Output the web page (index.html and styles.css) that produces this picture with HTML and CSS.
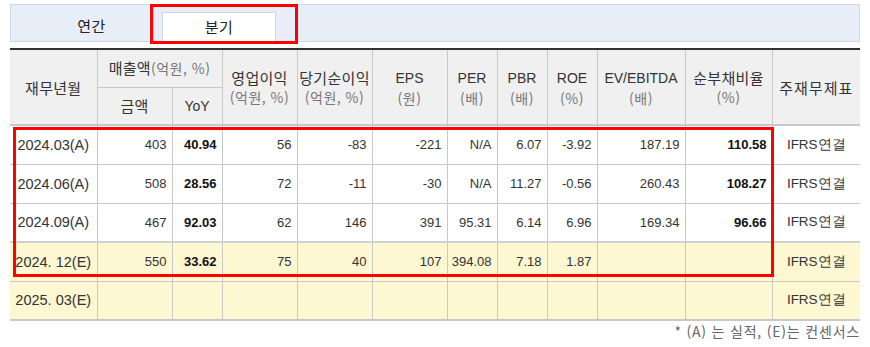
FILE: index.html
```html
<!DOCTYPE html>
<html lang="ko">
<head>
<meta charset="utf-8">
<link rel="stylesheet" href="styles.css">
</head>
<body>
<div class="wrap">
  <div class="tabs">
    <div class="tab">연간</div>
    <div class="tab active">분기</div>
  </div>
  <table class="fin">
    <colgroup>
      <col class="w87"><col class="w75"><col class="w50"><col class="w75"><col class="w75"><col class="w75"><col class="w50"><col class="w50"><col class="w50"><col class="w88"><col class="w87"><col class="w88">
    </colgroup>
    <thead>
      <tr>
        <th rowspan="2">재무년월</th>
        <th colspan="2">매출액<span class="unit">(억원, %)</span></th>
        <th rowspan="2">영업이익<br><span class="unit">(억원, %)</span></th>
        <th rowspan="2">당기순이익<br><span class="unit">(억원, %)</span></th>
        <th rowspan="2"><span class="en">EPS</span><br><span class="unit">(원)</span></th>
        <th rowspan="2"><span class="en">PER</span><br><span class="unit">(배)</span></th>
        <th rowspan="2"><span class="en">PBR</span><br><span class="unit">(배)</span></th>
        <th rowspan="2"><span class="en">ROE</span><br><span class="unit">(%)</span></th>
        <th rowspan="2"><span class="en">EV/EBITDA</span><br><span class="unit">(배)</span></th>
        <th rowspan="2">순부채비율<br><span class="unit">(%)</span></th>
        <th rowspan="2" class="wide">주재무제표</th>
      </tr>
      <tr class="sub">
        <th>금액</th>
        <th><span class="en">YoY</span></th>
      </tr>
    </thead>
    <tbody>
      <tr>
        <td class="date">2024.03(A)</td><td>403</td><td class="b">40.94</td><td>56</td><td>-83</td><td>-221</td><td>N/A</td><td>6.07</td><td>-3.92</td><td>187.19</td><td class="b">110.58</td><td class="std">IFRS연결</td>
      </tr>
      <tr>
        <td class="date">2024.06(A)</td><td>508</td><td class="b">28.56</td><td>72</td><td>-11</td><td>-30</td><td>N/A</td><td>11.27</td><td>-0.56</td><td>260.43</td><td class="b">108.27</td><td class="std">IFRS연결</td>
      </tr>
      <tr>
        <td class="date">2024.09(A)</td><td>467</td><td class="b">92.03</td><td>62</td><td>146</td><td>391</td><td>95.31</td><td>6.14</td><td>6.96</td><td>169.34</td><td class="b">96.66</td><td class="std">IFRS연결</td>
      </tr>
      <tr class="est first">
        <td class="date">2024. 12(E)</td><td>550</td><td class="b">33.62</td><td>75</td><td>40</td><td>107</td><td>394.08</td><td>7.18</td><td>1.87</td><td></td><td></td><td class="std">IFRS연결</td>
      </tr>
      <tr class="est">
        <td class="date">2025. 03(E)</td><td></td><td></td><td></td><td></td><td></td><td></td><td></td><td></td><td></td><td></td><td class="std">IFRS연결</td>
      </tr>
    </tbody>
  </table>
  <p class="note">* (A) 는 실적, (E)는 컨센서스</p>
  <div class="mark mark-tab"></div>
  <div class="mark mark-rows"></div>
</div>
</body>
</html>
```
FILE: styles.css
```css
* { box-sizing: border-box; }
body {
  margin: 0;
  background: #fff;
  font-family: "Noto Sans CJK KR", "Liberation Sans", sans-serif;
  color: #333;
}
.wrap {
  position: relative;
  padding: 4px 10px 0 10px;
  width: 870px;
}
.tabs {
  display: flex;
  height: 38px;
  background: #e8eef8;
  border: 1px solid #cfd7e6;
  padding-top: 7px;
}
.tab {
  width: 151px;
  padding-left: 10px;
  text-align: center;
  font-size: 15px;
  letter-spacing: 0.5px;
  line-height: 27px;
  color: #222;
}
.tab.active {
  width: 114px;
  padding-left: 0;
  background: #fff;
  border: 1px solid #cfd7e6;
  border-bottom: none;
}
.fin {
  margin-top: 6px;
  width: 850px;
  table-layout: fixed;
  border-collapse: collapse;
  border-top: 2px solid #333;
  border-bottom: 2px solid #c8c8c8;
}
.w87 { width: 87px; }
.w75 { width: 75px; }
.w50 { width: 50px; }
.w88 { width: 88px; }
.fin th {
  background: #f0f0f0;
  font-weight: normal;
  font-size: 15px;
  letter-spacing: 0.3px;
  line-height: 19px;
  color: #333;
  border-left: 1px solid #c8c8c8;
  border-right: 1px solid #c8c8c8;
  border-bottom: 1px solid #c8c8c8;
  height: 38px;
  padding: 0;
  text-align: center;
  white-space: nowrap;
}
.fin th.wide { letter-spacing: 1px; }
.fin thead tr.sub th { height: 38px; }
.fin thead { border-bottom: 2px solid #c8c8c8; }
.fin th:first-child { border-left: none; }
.fin tr:first-child th:last-child { border-right: none; }
.fin .unit {
  color: #777;
  font-size: 14px;
  letter-spacing: 0.5px;
}
.fin .en {
  font-family: "Liberation Sans", sans-serif;
  font-size: 14px;
  letter-spacing: 0;
}
.fin td {
  height: 39px;
  border: 1px solid #c8c8c8;
  padding: 0 5px 0 0;
  text-align: right;
  font-family: "Liberation Sans", sans-serif;
  font-size: 13px;
  color: #333;
  white-space: nowrap;
}
.fin td:first-child { border-left: none; }
.fin td:last-child { border-right: none; }
.fin td.date {
  text-align: center;
  padding: 0;
  font-size: 14.5px;
  color: #333;
}
.fin td.b { font-weight: bold; color: #111; }
.fin td.std { text-align: center; padding: 0; font-size: 13.5px; }
.fin tr.est td { background: #fdf7d2; }
.fin tr.est.first td { border-top: 2px solid #d0d0d0; }
.note {
  margin: 1px 0 0 0;
  line-height: 18px;
  text-align: right;
  font-size: 14px;
  letter-spacing: 0.8px;
  color: #666;
}
.mark {
  position: absolute;
  border: 3px solid #ff0000;
}
.mark-tab {
  left: 150px;
  top: 4px;
  width: 148px;
  height: 40px;
}
.mark-rows {
  left: 13px;
  top: 127px;
  width: 761px;
  height: 150px;
}
```
